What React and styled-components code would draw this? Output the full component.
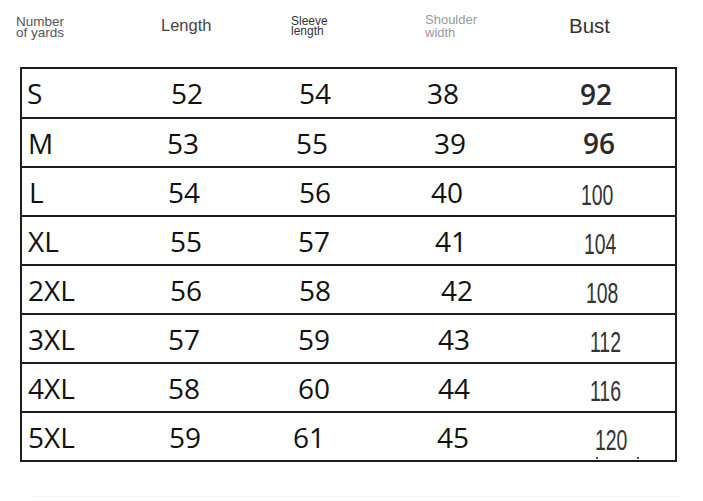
import React from "react";
import styled, { createGlobalStyle } from "styled-components";

const Global = createGlobalStyle`
  html, body { margin: 0; padding: 0; background: #fff; }
  body { width: 703px; height: 501px; overflow: hidden; }
`;

const Page = styled.div`
  width: 703px;
  height: 501px;
  display: flex;
  flex-direction: column;
  box-sizing: border-box;
  padding-top: 13px;
`;

const HeaderRow = styled.div`
  display: grid;
  grid-template-columns: 145px 130px 134px 144px 1fr;
  padding-left: 16px;
  height: 54px;
  font-family: "Liberation Sans", Arial, sans-serif;
`;

const HeadCell = styled.div`
  color: ${(p) => p.$color};
  font-size: ${(p) => p.$size}px;
  line-height: ${(p) => p.$lh}px;
  padding-top: ${(p) => p.$top}px;
  white-space: pre-line;
`;

const Table = styled.div`
  margin-left: 20px;
  width: 657px;
  box-sizing: border-box;
  border: 2px solid #1e1e1e;
  display: flex;
  flex-direction: column;
`;

const Row = styled.div`
  display: grid;
  grid-template-columns: 138px 130px 135px 145px 1fr;
  height: ${(p) => (p.$first ? 48 : 49)}px;
  box-sizing: border-box;
  border-top: ${(p) => (p.$first ? "none" : "2px solid #1e1e1e")};
  align-items: center;
  font-family: "Open Sans", "Noto Sans", sans-serif;
  font-size: 28px;
  line-height: 28px;
  color: #111;
`;

const Cell = styled.div`
  padding-left: ${(p) => p.$x}px;
  padding-top: ${(p) => p.$dy || 0}px;
  white-space: nowrap;
`;

const BoldNum = styled.span`
  font-weight: 600;
  color: #2a2a2a;
`;

const NarrowNum = styled.span`
  display: inline-block;
  font-family: "Liberation Sans", Arial, sans-serif;
  font-size: 29px;
  color: #333;
  transform: scaleX(0.67);
  transform-origin: left center;
`;

const Dots = styled.div`
  position: relative;
  &::before, &::after {
    content: "";
    position: absolute;
    top: 3px;
    width: 2px;
    height: 2px;
    background: #555;
  }
  &::before { left: 1px; }
  &::after { left: 42px; }
`;

const Fade = styled.div`
  margin: 34px 0 0 30px;
  width: 650px;
  height: 1px;
  background: #f6f6f6;
`;

const COL = [22, 160, 290, 425, 570];

const rows = [
  { s: "S", v: [27, 171, 299, 427, 580], d: ["52", "54", "38", "92"], bold: true },
  { s: "M", v: [28, 167, 296, 434, 583], d: ["53", "55", "39", "96"], bold: true },
  { s: "L", v: [29, 168, 299, 431, 581], d: ["54", "56", "40", "100"] },
  { s: "XL", v: [28, 170, 298, 435, 584], d: ["55", "57", "41", "104"] },
  { s: "2XL", v: [28, 170, 299, 441, 586], d: ["56", "58", "42", "108"] },
  { s: "3XL", v: [28, 168, 298, 438, 590], d: ["57", "59", "43", "112"] },
  { s: "4XL", v: [28, 168, 298, 438, 590], d: ["58", "60", "44", "116"] },
  { s: "5XL", v: [28, 169, 293, 437, 595], d: ["59", "61", "45", "120"], dots: true },
];

export default function App() {
  return (
    <>
      <Global />
      <Page>
        <HeaderRow>
          <HeadCell $color="#555" $size={13.5} $lh={11} $top={3}>{"Number\nof yards"}</HeadCell>
          <HeadCell $color="#444" $size={16.5} $lh={18} $top={3}>Length</HeadCell>
          <HeadCell $color="#333" $size={12} $lh={10} $top={3}>{"Sleeve\nlength"}</HeadCell>
          <HeadCell $color="#999" $size={13} $lh={13} $top={0}>{"Shoulder\nwidth"}</HeadCell>
          <HeadCell $color="#333" $size={20.5} $lh={22} $top={2}>Bust</HeadCell>
        </HeaderRow>
        <Table>
          {rows.map((r, i) => (
            <Row key={r.s} $first={i === 0}>
              <Cell $x={r.v[0] - COL[0]}>{r.s}</Cell>
              <Cell $x={r.v[1] - COL[1]}>{r.d[0]}</Cell>
              <Cell $x={r.v[2] - COL[2]}>{r.d[1]}</Cell>
              <Cell $x={r.v[3] - COL[3]}>{r.d[2]}</Cell>
              <Cell $x={r.v[4] - COL[4]} $dy={r.bold ? 1 : 5}>
                {r.bold ? (
                  <BoldNum>{r.d[3]}</BoldNum>
                ) : (
                  <NarrowNum>{r.d[3]}</NarrowNum>
                )}
                {r.dots && <Dots />}
              </Cell>
            </Row>
          ))}
        </Table>
        <Fade />
      </Page>
    </>
  );
}
